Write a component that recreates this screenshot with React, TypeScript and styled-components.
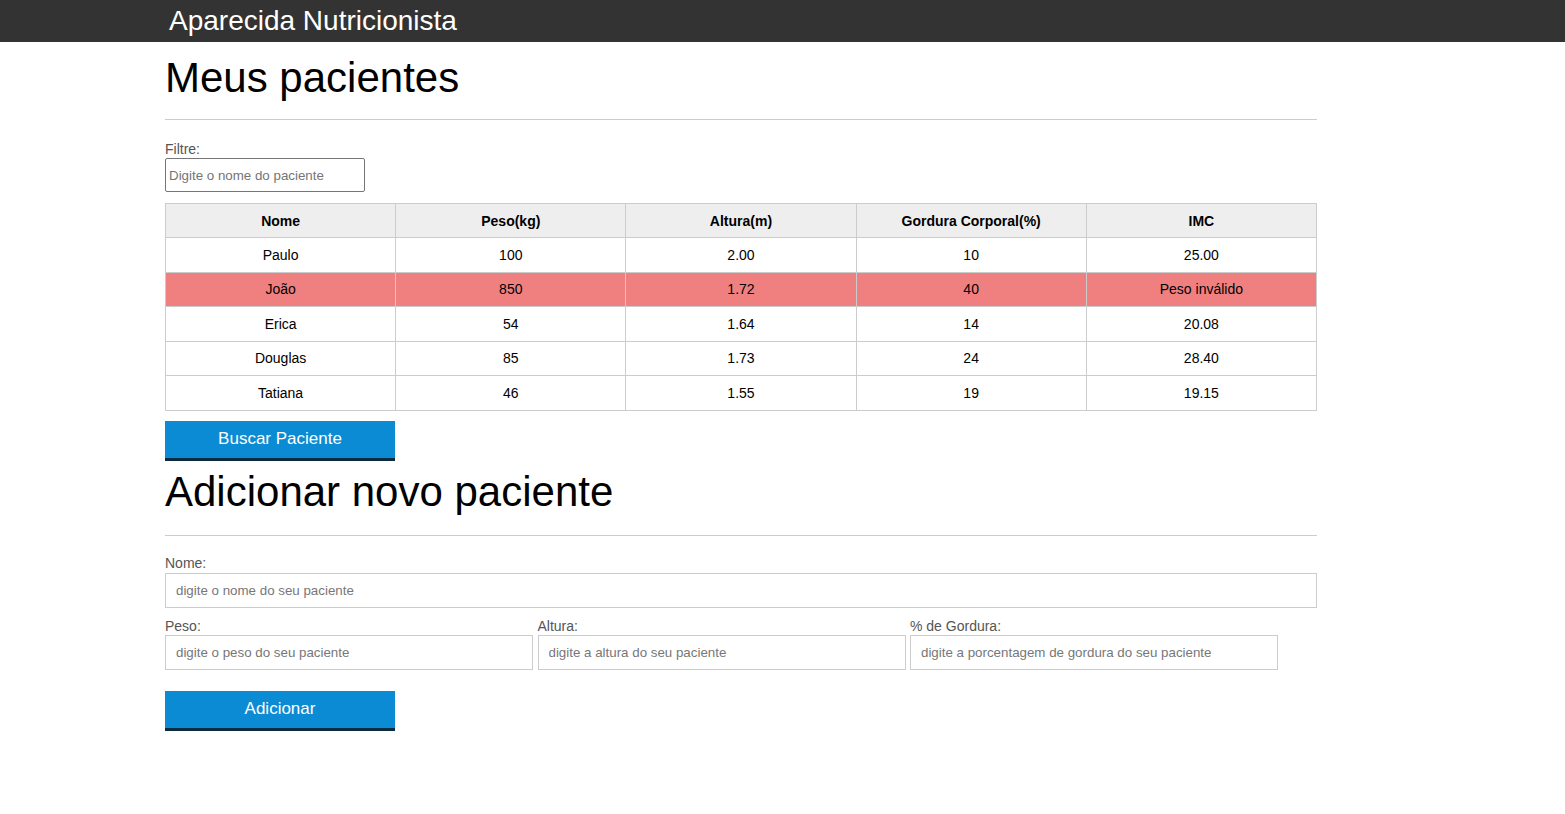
import React from "react";
import styled, { createGlobalStyle } from "styled-components";

const GlobalStyle = createGlobalStyle`
  html, body { margin: 0; padding: 0; background: #fff; }
  body { font-family: "Liberation Sans", Arial, sans-serif; color: #000; }
  * { box-sizing: border-box; }
`;

const Header = styled.header`
  background: #333;
  height: 42px;
`;

const Container = styled.div`
  width: 1152px;
  margin-left: 165px;
`;

const Brand = styled.h1`
  margin: 0;
  padding-left: 4px;
  color: #fff;
  font-weight: normal;
  font-size: 28px;
  line-height: 42px;
`;

const Title = styled.h2<{ $top: number }>`
  margin: ${(p) => p.$top}px 0 0;
  font-weight: normal;
  font-size: 42px;
  line-height: 48px;
`;

const Rule = styled.hr<{ $top: number }>`
  border: 0;
  border-top: 1px solid #ccc;
  margin: ${(p) => p.$top}px 0 0;
  height: 0;
`;

const Label = styled.label<{ $top: number; $bottom: number }>`
  display: block;
  font-size: 14px;
  line-height: 16px;
  color: #555;
  margin-top: ${(p) => p.$top}px;
  margin-bottom: ${(p) => p.$bottom}px;
`;

const FilterInput = styled.input`
  display: block;
  width: 200px;
  height: 34px;
  border: 1px solid #767676;
  border-radius: 2px;
  padding: 0 3px;
  font-family: "Liberation Sans", Arial, sans-serif;
  font-size: 13.333px;
  &::placeholder { color: #757575; }
`;

const Table = styled.table`
  width: 100%;
  border-collapse: collapse;
  margin-top: 11px;
  font-size: 14px;
  table-layout: fixed;
`;

const Th = styled.th`
  background: #eee;
  border: 1px solid #ccc;
  height: 34px;
  padding: 0 8px;
  font-weight: bold;
  text-align: center;
`;

const Tr = styled.tr<{ $invalid?: boolean }>`
  background: ${(p) => (p.$invalid ? "#f08080" : "#fff")};
`;

const Td = styled.td`
  border: 1px solid #ccc;
  height: 34.5px;
  padding: 0 8px;
  text-align: center;
`;

const Button = styled.button<{ $top: number }>`
  display: block;
  width: 230px;
  height: 40px;
  margin-top: ${(p) => p.$top}px;
  background: #0b8bd3;
  color: #fff;
  border: 0;
  border-bottom: 3px solid #0a2b40;
  font-family: "Liberation Sans", Arial, sans-serif;
  font-size: 17px;
  padding: 0;
  cursor: pointer;
`;

const FormInput = styled.input<{ $full?: boolean }>`
  display: block;
  width: ${(p) => (p.$full ? "100%" : "368px")};
  height: 35px;
  border: 1px solid #ccc;
  border-radius: 0;
  padding: 0 10px;
  font-family: "Liberation Sans", Arial, sans-serif;
  font-size: 13.333px;
  &::placeholder { color: #777; }
`;

const Row = styled.div`
  display: flex;
  gap: 4.5px;
  margin-top: 10px;
`;

const Field = styled.div`
  display: flex;
  flex-direction: column;
`;

const FieldLabel = styled.label`
  font-size: 14px;
  line-height: 16px;
  color: #555;
  margin-bottom: 1px;
`;

const pacientes = [
  { nome: "Paulo", peso: "100", altura: "2.00", gordura: "10", imc: "25.00" },
  { nome: "João", peso: "850", altura: "1.72", gordura: "40", imc: "Peso inválido", invalid: true },
  { nome: "Erica", peso: "54", altura: "1.64", gordura: "14", imc: "20.08" },
  { nome: "Douglas", peso: "85", altura: "1.73", gordura: "24", imc: "28.40" },
  { nome: "Tatiana", peso: "46", altura: "1.55", gordura: "19", imc: "19.15" },
];

export default function App() {
  return (
    <>
      <GlobalStyle />
      <Header>
        <Container>
          <Brand>Aparecida Nutricionista</Brand>
        </Container>
      </Header>
      <Container>
        <Title $top={12}>Meus pacientes</Title>
        <Rule $top={17} />
        <Label $top={21} $bottom={1}>Filtre:</Label>
        <FilterInput placeholder="Digite o nome do paciente" />
        <Table>
          <thead>
            <tr>
              <Th>Nome</Th>
              <Th>Peso(kg)</Th>
              <Th>Altura(m)</Th>
              <Th>Gordura Corporal(%)</Th>
              <Th>IMC</Th>
            </tr>
          </thead>
          <tbody>
            {pacientes.map((p) => (
              <Tr key={p.nome} $invalid={p.invalid}>
                <Td>{p.nome}</Td>
                <Td>{p.peso}</Td>
                <Td>{p.altura}</Td>
                <Td>{p.gordura}</Td>
                <Td>{p.imc}</Td>
              </Tr>
            ))}
          </tbody>
        </Table>
        <Button $top={10}>Buscar Paciente</Button>
        <Title $top={7}>Adicionar novo paciente</Title>
        <Rule $top={19} />
        <Label $top={19} $bottom={2}>Nome:</Label>
        <FormInput $full placeholder="digite o nome do seu paciente" />
        <Row>
          <Field>
            <FieldLabel>Peso:</FieldLabel>
            <FormInput placeholder="digite o peso do seu paciente" />
          </Field>
          <Field>
            <FieldLabel>Altura:</FieldLabel>
            <FormInput placeholder="digite a altura do seu paciente" />
          </Field>
          <Field>
            <FieldLabel>% de Gordura:</FieldLabel>
            <FormInput placeholder="digite a porcentagem de gordura do seu paciente" />
          </Field>
        </Row>
        <Button $top={21}>Adicionar</Button>
      </Container>
    </>
  );
}
